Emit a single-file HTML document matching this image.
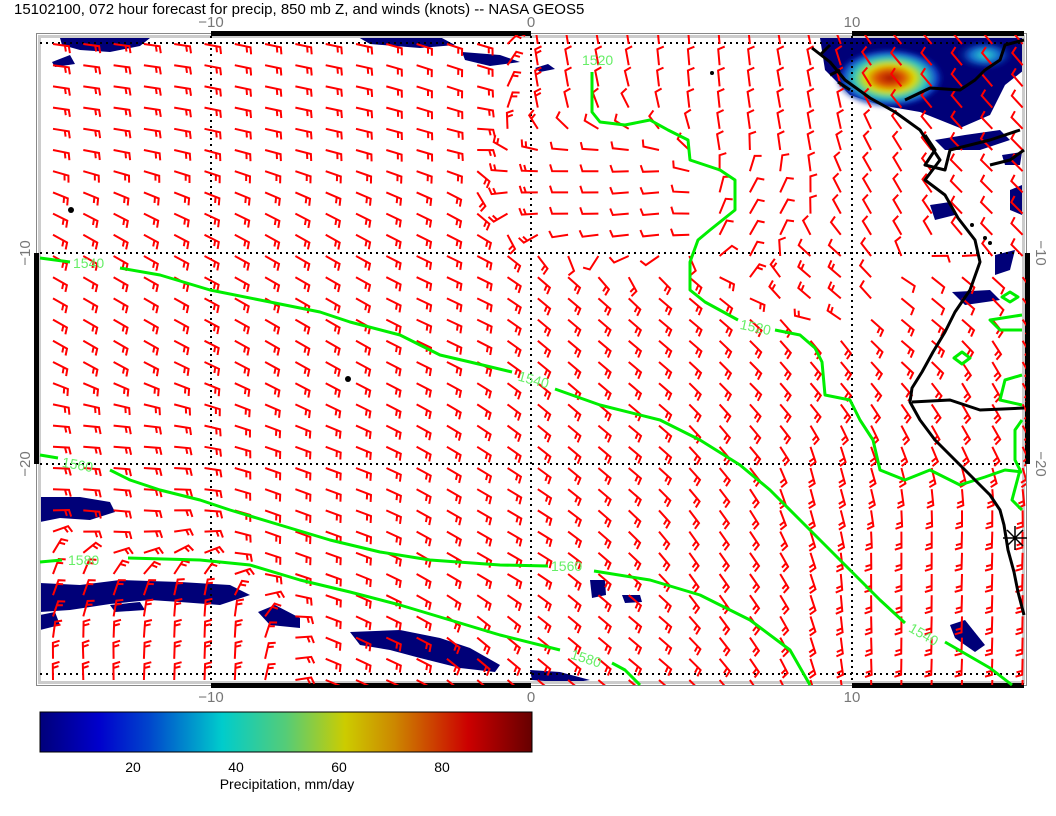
<!DOCTYPE html>
<html><head><meta charset="utf-8"><style>
html,body{margin:0;padding:0;background:#fff;width:1056px;height:816px;overflow:hidden}
svg{display:block}
text{font-family:"Liberation Sans",sans-serif}
</style></head><body>
<svg id="s" width="1056" height="816" viewBox="0 0 1056 816" xmlns="http://www.w3.org/2000/svg">
<defs>
<linearGradient id="cb" x1="0" x2="1" y1="0" y2="0">
<stop offset="0" stop-color="#00007a"/><stop offset="0.12" stop-color="#0000cc"/><stop offset="0.22" stop-color="#0044cc"/><stop offset="0.37" stop-color="#00cccc"/><stop offset="0.5" stop-color="#55cc77"/><stop offset="0.62" stop-color="#cccc00"/><stop offset="0.72" stop-color="#cc8800"/><stop offset="0.87" stop-color="#cc0000"/><stop offset="1" stop-color="#660000"/>
</linearGradient>
<radialGradient id="hot" cx="0.5" cy="0.5" r="0.5">
<stop offset="0" stop-color="#aa1100"/><stop offset="0.25" stop-color="#dd5500"/><stop offset="0.45" stop-color="#dddd00"/><stop offset="0.65" stop-color="#33ccbb"/><stop offset="0.85" stop-color="#1144cc"/><stop offset="1" stop-color="#000080" stop-opacity="0"/>
</radialGradient>
<radialGradient id="cy" cx="0.5" cy="0.5" r="0.5">
<stop offset="0" stop-color="#33ddcc"/><stop offset="0.5" stop-color="#1166cc"/><stop offset="1" stop-color="#000080" stop-opacity="0"/>
</radialGradient>
<filter id="bl"><feGaussianBlur stdDeviation="2"/></filter>
<clipPath id="fr"><rect x="38" y="35" width="988" height="650"/></clipPath>
</defs>
<text x="14" y="14" font-size="15" fill="#000">15102100, 072 hour forecast for precip, 850 mb Z, and winds (knots) -- NASA GEOS5</text>

<g fill="#000078">
<path d="M60,38 L150,38 L140,46 L110,52 L80,50 L62,45Z"/>
<path d="M52,62 L70,55 L75,64 L55,67Z"/>
<path d="M358,37 L440,37 L455,45 L420,48 L370,44Z"/>
<path d="M462,52 L500,55 L520,62 L490,66 L465,60Z"/>
<path d="M535,68 L548,64 L555,69 L540,72Z"/>
<path d="M820,38 L1024,38 L1024,70 L1005,85 L990,115 L960,128 L935,118 L920,112 L880,105 L850,95 L825,70Z"/>
<path d="M935,140 L965,135 L1000,130 L1010,140 L980,150 L945,150Z"/>
<path d="M1002,155 L1022,152 L1020,165 L1005,165Z"/>
<path d="M930,205 L950,202 L955,215 L935,220Z"/>
<path d="M1010,190 L1022,185 L1022,215 L1010,210Z"/>
<path d="M995,255 L1015,250 L1010,270 L995,275Z"/>
<path d="M952,292 L990,290 L1000,300 L965,305Z"/>
<path d="M950,625 L965,620 L985,645 L975,652 L955,638Z"/>
<path d="M40,497 L80,497 L110,502 L115,512 L90,520 L60,518 L40,522Z"/>
<path d="M40,583 L80,585 L120,580 L180,582 L230,585 L250,595 L220,605 L180,602 L150,600 L110,604 L70,610 L40,612Z"/>
<path d="M110,605 L140,602 L145,610 L115,612Z"/>
<path d="M258,612 L275,605 L300,618 L300,628 L270,625Z"/>
<path d="M350,632 L400,630 L440,638 L470,648 L500,665 L495,672 L460,668 L420,658 L390,650 L360,645Z"/>
<path d="M590,580 L605,580 L606,595 L592,598Z"/>
<path d="M622,595 L640,595 L642,602 L625,603Z"/>
<path d="M530,670 L560,672 L590,680 L570,683 L532,680Z"/>
<path d="M40,615 L55,612 L60,625 L40,630Z"/>
</g>
<g filter="url(#bl)">
<ellipse cx="890" cy="78" rx="55" ry="30" fill="url(#hot)"/>
<ellipse cx="985" cy="55" rx="30" ry="15" fill="url(#cy)"/>
</g>

<rect x="36.5" y="33.5" width="990" height="652" fill="none" stroke="#888" stroke-width="1"/>
<rect x="39.5" y="36.5" width="984" height="646" fill="none" stroke="#ccc" stroke-width="3"/>
<g stroke="#000" stroke-width="2" stroke-dasharray="2,4">
<line x1="211" y1="36" x2="211" y2="684"/><line x1="531" y1="36" x2="531" y2="684"/><line x1="852" y1="36" x2="852" y2="684"/>
<line x1="40" y1="43" x2="1024" y2="43"/><line x1="40" y1="253" x2="1024" y2="253"/><line x1="40" y1="464" x2="1024" y2="464"/><line x1="40" y1="674" x2="1024" y2="674"/>
</g>
<g fill="#000">
<rect x="211" y="31" width="320" height="5"/><rect x="852" y="31" width="172" height="5"/>
<rect x="211" y="683" width="320" height="5"/><rect x="852" y="683" width="172" height="5"/>
<rect x="34" y="253" width="5" height="211"/><rect x="1025" y="253" width="5" height="211"/>
</g>
<g font-size="15" fill="#777" text-anchor="middle">
<text x="211" y="27">−10</text><text x="531" y="27">0</text><text x="852" y="27">10</text>
<text x="211" y="702">−10</text><text x="531" y="702">0</text><text x="852" y="702">10</text>
<text transform="translate(30,253) rotate(-90)">−10</text>
<text transform="translate(30,464) rotate(-90)">−20</text>
<text transform="translate(1036,253) rotate(90)">−10</text>
<text transform="translate(1036,464) rotate(90)">−20</text>
</g>

<g id="barbs" clip-path="url(#fr)" stroke="#ff0000" stroke-width="2" fill="none" stroke-linecap="butt"></g>

<g stroke="#00ee00" stroke-width="3" fill="none" stroke-linejoin="round">
<path d="M592,72 L592,112 L600,122 L625,125 L650,120 L668,130 L688,140 L690,160 L720,170 L735,180 L735,210 L710,230 L698,240 L690,262 L690,290 L705,302 L738,320"/>
<path d="M775,330 L800,335 L815,348 L822,362 L825,395 L850,400 L860,420 L873,440 L880,470 L905,480 L930,470 L960,485 L985,477 L1005,470 L1022,472"/>
<path d="M1022,330 L1000,330 L990,320 L1022,315 M1010,292 L1018,297 L1010,302 L1002,297Z M962,352 L970,358 L962,364 L954,358Z M1022,375 L1005,380 L1000,400 L1022,405 M1022,420 L1015,430 L1015,460 L1020,470 L1012,500 L1022,510"/>
<path d="M40,258 L70,262 M120,268 L160,275 L210,290 L260,300 L320,312 L350,322 L400,335 L440,355 L470,362 L512,372"/>
<path d="M555,389 L600,405 L660,420 L700,440 L740,465 L770,490 L800,520 L820,540 L850,570 L880,600 L905,623"/>
<path d="M945,642 L990,668 L1012,685"/>
<path d="M40,455 L58,458 M110,470 L130,480 L160,490 L200,500 L230,510 L280,525 L330,540 L380,552 L430,560 L500,565 L548,566"/>
<path d="M594,571 L650,580 L700,595 L750,620 L790,650 L810,685"/>
<path d="M40,562 L62,560 M128,558 L200,560 L250,565 L300,580 L350,592 L400,605 L450,620 L500,635 L560,650"/>
<path d="M612,663 L625,670 L640,685"/>
</g>
<g font-size="14" fill="#66ee66">
<text x="582" y="65">1520</text>
<text x="740" y="332" transform="rotate(12 755 327)">1520</text>
<text x="73" y="268">1540</text>
<text x="518" y="385" transform="rotate(15 535 380)">1540</text>
<text x="908" y="640" transform="rotate(30 925 635)">1540</text>
<text x="62" y="470" transform="rotate(10 80 465)">1560</text>
<text x="551" y="571">1560</text>
<text x="68" y="565">1580</text>
<text x="570" y="663" transform="rotate(18 585 660)">1580</text>
</g>

<g stroke="#000" stroke-width="3" fill="none" stroke-linejoin="round">
<path d="M812,48 L830,62 L845,80 L870,98 L895,112 L920,130 L940,160 L925,180 L945,195 L958,218 L975,240 L980,262 L970,290 L955,312 L945,332 L933,352 L922,372 L912,388 L910,402 L920,420 L935,440 L955,460 L975,480 L990,495 L1000,510 L1004,525 L1008,550 L1014,572 L1018,592 L1024,615"/>
<path d="M905,100 L930,88 L960,90 L975,80 L985,70 L1000,60 L1005,45 L1024,40"/>
<path d="M925,135 L935,150 L925,165 L945,170 L950,150 L990,140 L1020,130"/>
<path d="M912,402 L950,400 L980,410 L1024,408"/>
<path d="M1024,150 L1010,160 L990,165"/>
<path d="M820,55 L830,45 M830,75 L840,70 M838,82 L850,90"/>
</g>
<g stroke="#000" stroke-width="1.5"><path d="M1003,538 L1027,538 M1015,526 L1015,550 M1007,530 L1023,546 M1023,530 L1007,546"/></g>
<circle cx="71" cy="210" r="3" fill="#000"/><circle cx="348" cy="379" r="3" fill="#000"/><circle cx="712" cy="73" r="2" fill="#000"/>
<circle cx="972" cy="225" r="2" fill="#000"/><circle cx="985" cy="238" r="2" fill="#000"/><circle cx="990" cy="243" r="2" fill="#000"/>

<rect x="40" y="712" width="492" height="40" fill="url(#cb)" stroke="#000" stroke-width="1"/>
<g font-size="14" fill="#000" text-anchor="middle">
<text x="133" y="772">20</text><text x="236" y="772">40</text><text x="339" y="772">60</text><text x="442" y="772">80</text>
<text x="287" y="789">Precipitation, mm/day</text>
</g>
</svg>
<script>
var A=[[100,60,8],[300,60,12],[450,60,18],[100,300,30],[300,300,30],[450,300,25],[100,500,5],[300,520,20],[480,540,30],
[60,600,-70],[80,660,-92],[200,660,-88],[380,660,25],[480,660,40],
[560,70,-100],[700,70,-95],[800,120,-100],[580,190,180],[650,210,175],[760,220,-60],[820,275,-140],
[560,310,40],[680,310,40],[620,370,40],[620,430,40],[740,370,45],[740,430,50],[800,370,50],[720,560,55],[620,620,40],[820,480,75],[900,560,90],[980,560,92],[960,650,92],
[930,320,40],[990,380,60],[930,80,-130],[990,180,-135],[880,200,-120]];
var g=document.getElementById('barbs'),h='';
function ang(x,y){var sx=0,sy=0;for(var i=0;i<A.length;i++){var dx=x-A[i][0],dy=y-A[i][1],w=1/Math.pow(dx*dx+dy*dy+400,2),t=A[i][2]*Math.PI/180;sx+=w*Math.cos(t);sy+=w*Math.sin(t);}return Math.atan2(sy,sx);}
for(var r=0;r<31;r++){for(var c=0;c<33;c++){var x=53+c*30.3,y=44+r*21.2;var t=ang(x,y),L=16;
var ex=x+L*Math.cos(t),ey=y+L*Math.sin(t);var tt=t+Math.PI/2-0.3;
h+='<path d="M'+x.toFixed(1)+','+y.toFixed(1)+'L'+ex.toFixed(1)+','+ey.toFixed(1)+'l'+(7*Math.cos(tt)).toFixed(1)+','+(7*Math.sin(tt)).toFixed(1);
var two=!((x>540&&x<860&&y<270)||(x>860&&y<300));
if(two){var bx=ex-4*Math.cos(t),by=ey-4*Math.sin(t);h+='M'+bx.toFixed(1)+','+by.toFixed(1)+'l'+(6*Math.cos(tt)).toFixed(1)+','+(6*Math.sin(tt)).toFixed(1);}
h+='"/>';}}
g.innerHTML=h;
</script>
</body></html>
